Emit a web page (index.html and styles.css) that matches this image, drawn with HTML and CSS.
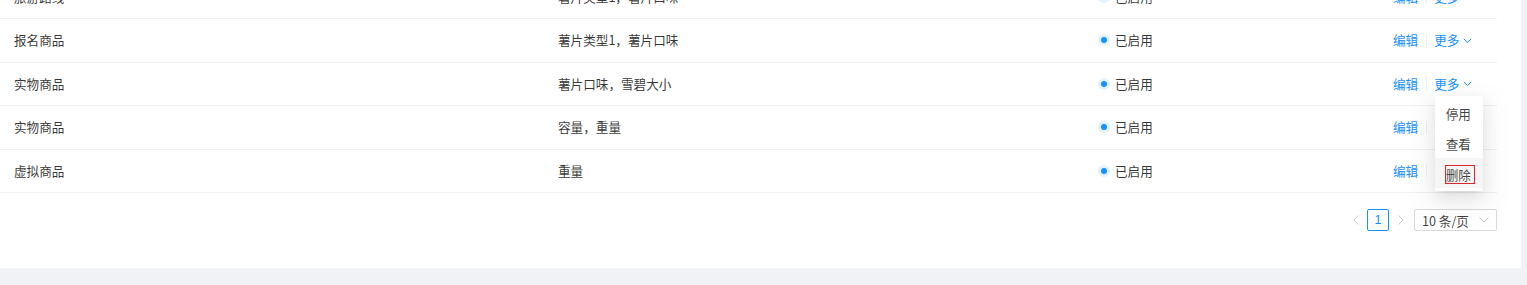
FILE: index.html
```html
<!DOCTYPE html>
<html lang="zh-CN">
<head>
<meta charset="utf-8">
<title>商品列表</title>
<link rel="stylesheet" href="styles.css">
</head>
<body>
<div class="card">
  <div class="table">
    <div class="row">
      <div class="cell">旅游路线</div>
      <div class="cell">薯片类型1，薯片口味</div>
      <div class="cell"><span class="dot"></span>已启用</div>
      <div class="cell actions"><a class="link">编辑</a><span class="divider"></span><span class="more"><a class="link">更多</a><svg class="chev" width="9" height="6" viewBox="0 0 9 6"><path d="M0.8 0.8 L4.5 4.6 L8.2 0.8" fill="none" stroke="#1890ff" stroke-width="1"/></svg></span></div>
    </div>
    <div class="row">
      <div class="cell">报名商品</div>
      <div class="cell">薯片类型1，薯片口味</div>
      <div class="cell"><span class="dot"></span>已启用</div>
      <div class="cell actions"><a class="link">编辑</a><span class="divider"></span><span class="more"><a class="link">更多</a><svg class="chev" width="9" height="6" viewBox="0 0 9 6"><path d="M0.8 0.8 L4.5 4.6 L8.2 0.8" fill="none" stroke="#1890ff" stroke-width="1"/></svg></span></div>
    </div>
    <div class="row">
      <div class="cell">实物商品</div>
      <div class="cell">薯片口味，雪碧大小</div>
      <div class="cell"><span class="dot"></span>已启用</div>
      <div class="cell actions"><a class="link">编辑</a><span class="divider"></span><span class="more"><a class="link">更多</a><svg class="chev" width="9" height="6" viewBox="0 0 9 6"><path d="M0.8 0.8 L4.5 4.6 L8.2 0.8" fill="none" stroke="#1890ff" stroke-width="1"/></svg>
        <ul class="menu">
          <li class="menu-item">停用</li>
          <li class="menu-item">查看</li>
          <li class="menu-item active"><span class="focus">删除</span></li>
        </ul>
      </span></div>
    </div>
    <div class="row">
      <div class="cell">实物商品</div>
      <div class="cell">容量，重量</div>
      <div class="cell"><span class="dot"></span>已启用</div>
      <div class="cell actions"><a class="link">编辑</a><span class="divider"></span><span class="more"><a class="link">更多</a><svg class="chev" width="9" height="6" viewBox="0 0 9 6"><path d="M0.8 0.8 L4.5 4.6 L8.2 0.8" fill="none" stroke="#1890ff" stroke-width="1"/></svg></span></div>
    </div>
    <div class="row">
      <div class="cell">虚拟商品</div>
      <div class="cell">重量</div>
      <div class="cell"><span class="dot"></span>已启用</div>
      <div class="cell actions"><a class="link">编辑</a><span class="divider"></span><span class="more"><a class="link">更多</a><svg class="chev" width="9" height="6" viewBox="0 0 9 6"><path d="M0.8 0.8 L4.5 4.6 L8.2 0.8" fill="none" stroke="#1890ff" stroke-width="1"/></svg></span></div>
    </div>
  </div>
  <div class="pagination">
    <span class="pg-arrow prev"><svg width="6" height="10" viewBox="0 0 6 10"><path d="M5.2 0.6 L0.9 5 L5.2 9.4" fill="none" stroke="#c4c4c4" stroke-width="1"/></svg></span>
    <span class="pg-item">1</span>
    <span class="pg-arrow next"><svg width="6" height="10" viewBox="0 0 6 10"><path d="M0.8 0.6 L5.1 5 L0.8 9.4" fill="none" stroke="#c4c4c4" stroke-width="1"/></svg></span>
    <span class="pg-select"><span class="pg-select-text">10 条/页</span><svg width="10" height="6" viewBox="0 0 10 6"><path d="M0.6 0.6 L5 5 L9.4 0.6" fill="none" stroke="#c4c4c4" stroke-width="1"/></svg></span>
  </div>
</div>
</body>
</html>
```
FILE: styles.css
```css
html, body {
  margin: 0;
  padding: 0;
}
body {
  background: #f0f2f5;
  font-family: "Noto Sans CJK SC", "Noto Sans", sans-serif;
  font-size: 12.6px;
  color: rgba(0, 0, 0, 0.8);
  overflow: hidden;
}
.card {
  width: 1521px;
  box-sizing: border-box;
  background: #fff;
  margin-top: -24.5px;
  padding: 0 24px 37px 0;
}
.table {
  width: 1497px;
}
.row {
  display: grid;
  grid-template-columns: 544px 543px 292px 1fr;
  height: 43.5px;
  box-sizing: border-box;
  border-bottom: 1px solid #f0f0f0;
  align-items: center;
}
.cell {
  padding-left: 14px;
  display: flex;
  align-items: center;
  line-height: 20px;
  white-space: nowrap;
}
.dot {
  width: 6px;
  height: 6px;
  border-radius: 50%;
  background: #1890ff;
  box-shadow: 0 0 0 3px rgba(24, 144, 255, 0.12);
  margin-right: 8px;
}
.link {
  color: #1890ff;
  cursor: pointer;
}
.divider {
  width: 1px;
  height: 13px;
  background: #f0f0f0;
  margin: 0 7px 0 8px;
}
.more {
  position: relative;
  display: flex;
  align-items: center;
}
.chev {
  margin-left: 4px;
  margin-top: 1px;
}
.menu {
  position: absolute;
  top: calc(100% + 2px);
  left: 1px;
  width: 48px;
  margin: 0;
  padding: 3.6px 0;
  list-style: none;
  background: #fff;
  border-radius: 2px;
  box-shadow: 0 3px 6px -4px rgba(0, 0, 0, 0.12), 0 6px 16px 0 rgba(0, 0, 0, 0.08), 0 9px 28px 8px rgba(0, 0, 0, 0.05);
  z-index: 10;
}
.menu-item {
  height: 29.5px;
  line-height: 29.5px;
  padding: 0 10px 0 10.5px;
  color: rgba(0, 0, 0, 0.75);
}
.menu-item.active {
  background: #f5f5f5;
}
.focus {
  display: inline-block;
  line-height: 15px;
  padding: 1px 3px 1px 0;
  margin-left: -1px;
  border: 1px solid #d9262c;
  vertical-align: middle;
}
.pagination {
  display: flex;
  justify-content: flex-end;
  align-items: center;
  margin-top: 16px;
  height: 22px;
}
.pg-arrow {
  display: flex;
  align-items: center;
  justify-content: center;
  height: 22px;
}
.prev {
  width: 20px;
  margin-right: 1px;
}
.next {
  width: 22px;
  margin: 0 2px 0 1px;
}
.pg-item {
  width: 22px;
  height: 22px;
  box-sizing: border-box;
  border: 1px solid #1890ff;
  border-radius: 2px;
  color: #1890ff;
  display: flex;
  align-items: center;
  justify-content: center;
  font-family: "Liberation Sans", "Noto Sans CJK SC", sans-serif;
}
.pg-select {
  width: 83px;
  height: 22px;
  box-sizing: border-box;
  border: 1px solid #d9d9d9;
  border-radius: 2px;
  display: flex;
  align-items: center;
  justify-content: space-between;
  padding: 0 7px 0 7px;
}
.pg-select-text {
  color: rgba(0, 0, 0, 0.75);
}
```
